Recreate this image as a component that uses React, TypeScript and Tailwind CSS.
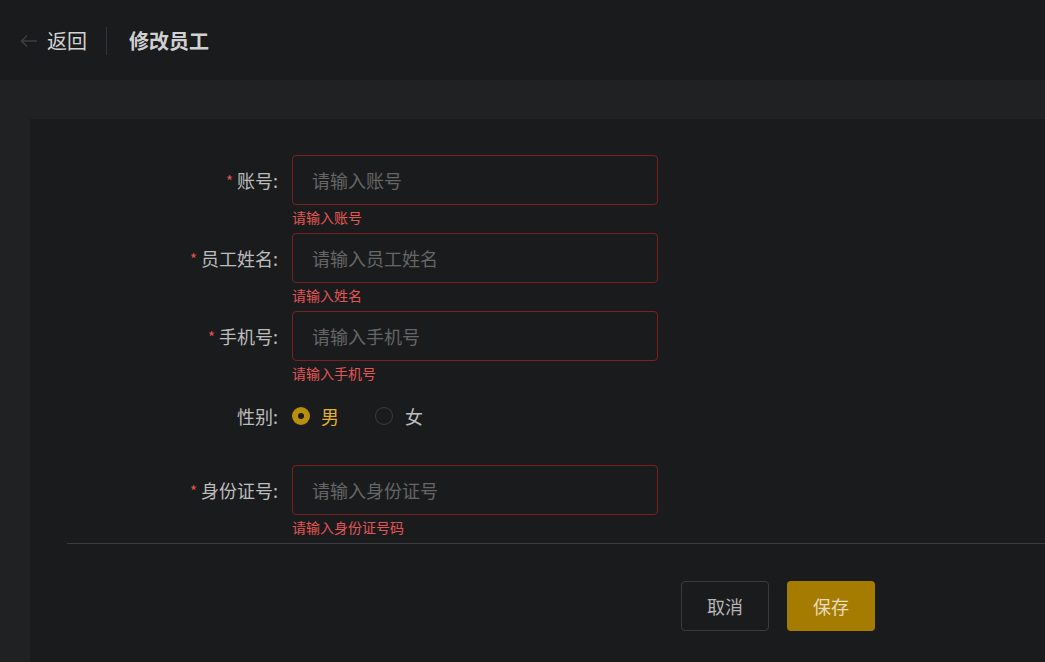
import React from 'react'

const font = { fontFamily: '"Noto Sans CJK SC", "Noto Sans", sans-serif' }

type Field = { label: string; placeholder: string; error: string }

const topFields: Field[] = [
  { label: '账号:', placeholder: '请输入账号', error: '请输入账号' },
  { label: '员工姓名:', placeholder: '请输入员工姓名', error: '请输入姓名' },
  { label: '手机号:', placeholder: '请输入手机号', error: '请输入手机号' },
]

const idField: Field = { label: '身份证号:', placeholder: '请输入身份证号', error: '请输入身份证号码' }

const FieldRow = ({ field }: { field: Field }) => (
  <div className="flex">
    <div className="w-[211px] mr-[14px] h-[50px] flex items-center justify-end text-[18px] text-[#bdbdbd]">
      <span className="text-[#e05252] mr-[4px] text-[15px] leading-none">*</span>
      {field.label}
    </div>
    <div className="flex flex-col">
      <input
        placeholder={field.placeholder}
        className="w-[366px] h-[50px] rounded-[4px] border border-[#7a2020] bg-[#1a1b1d] px-[19px] text-[18px] text-[#ccc] placeholder:text-[#666] outline-none"
        style={font}
      />
      <div className="h-[28px] text-[14px] leading-[24px] text-[#e35656]">{field.error}</div>
    </div>
  </div>
)

export default function App() {
  return (
    <div className="w-[1045px] h-[662px] overflow-hidden bg-[#202123] flex flex-col" style={font}>
      {/* Header */}
      <div className="h-[80px] bg-[#1a1b1d] flex items-center pl-[20px] pt-[2px] shrink-0">
        <svg width="18" height="14" viewBox="0 0 18 14" fill="none" className="mr-[9px]">
          <path d="M17 7H2M7 1.5L1.5 7L7 12.5" stroke="#3d3e41" strokeWidth="1.4" />
        </svg>
        <span className="text-[20px] text-[#d2d2d2]">返回</span>
        <div className="w-px h-[28px] bg-[#333438] ml-[19px] mr-[22px]" />
        <span className="text-[20px] font-bold text-[#d0d0d0]">修改员工</span>
      </div>

      {/* Card */}
      <div className="flex-1 mt-[39px] ml-[30px] bg-[#1a1b1d] pt-[36px] pl-[37px]">
        {topFields.map((f) => (
          <FieldRow key={f.label} field={f} />
        ))}

        {/* Gender */}
        <div className="flex h-[54px] mb-[22px] items-center">
          <div className="w-[211px] mr-[14px] text-right text-[18px] text-[#bdbdbd]">性别:</div>
          <label className="flex items-center mr-[36px]">
            <span className="w-[18px] h-[18px] rounded-full bg-[#b88e0d] flex items-center justify-center">
              <span className="w-[6px] h-[6px] rounded-full bg-[#1a1b1d]" />
            </span>
            <span className="ml-[11px] text-[18px] text-[#e0b12a]">男</span>
          </label>
          <label className="flex items-center">
            <span className="w-[18px] h-[18px] rounded-full border border-[#3c3d40]" />
            <span className="ml-[12px] text-[18px] text-[#bdbdbd]">女</span>
          </label>
        </div>

        <FieldRow field={idField} />

        <div className="h-px bg-[#3a3b3e]" />

        <div className="flex pl-[614px] pt-[37px] gap-[18px]">
          <button className="w-[88px] h-[50px] rounded-[4px] border border-[#3a3b3e] text-[18px] text-[#b5b5b5]">
            取消
          </button>
          <button className="w-[88px] h-[50px] rounded-[4px] bg-[#a67c00] text-[18px] text-[#e6dcc0]">
            保存
          </button>
        </div>
      </div>
    </div>
  )
}
